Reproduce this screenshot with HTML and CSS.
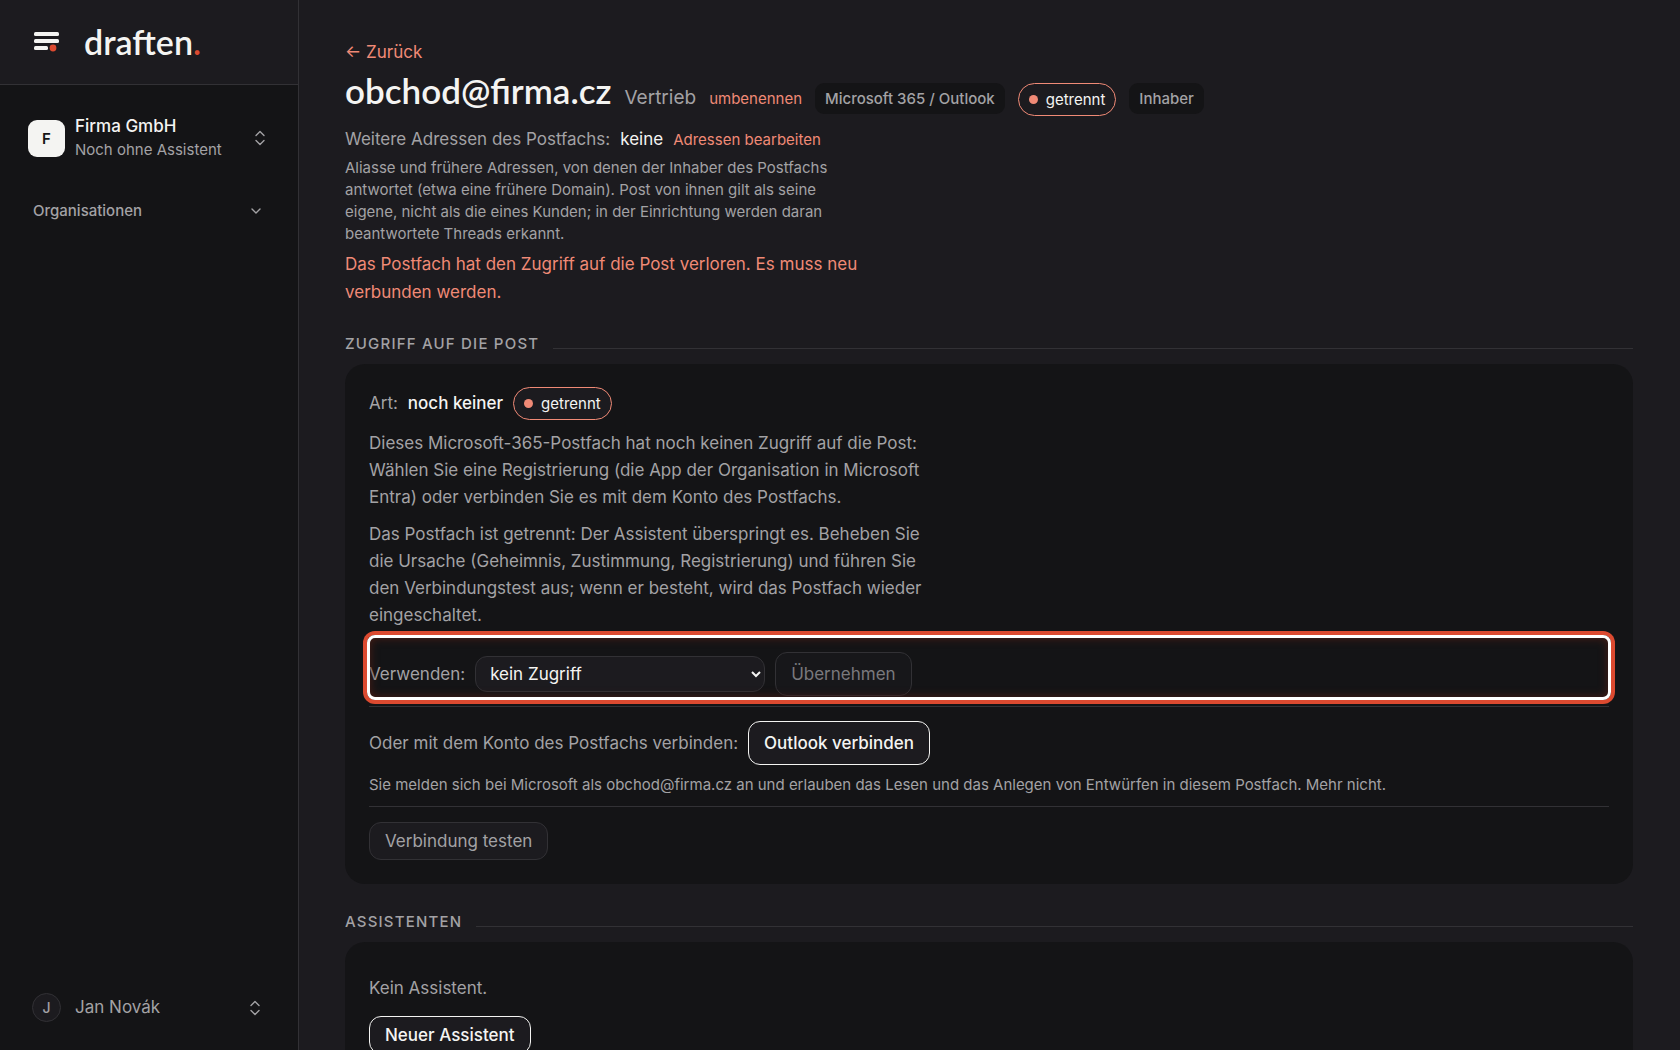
FILE: index.html
```html
<!DOCTYPE html>
<html lang="de">
<head>
    <meta charset="UTF-8">
    <meta name="viewport" content="width=device-width, initial-scale=1.0">
    <title>obchod@firma.cz – draften</title>
    <link rel="stylesheet" href="styles.css">
</head>
<body>
    <div class="app">
        <aside class="sidebar">
            <a href="#" class="brand">
                <svg class="brand-icon" width="26" height="20" viewBox="0 0 26 20" aria-hidden="true">
                    <rect x="0" y="0" width="25" height="4" rx="1.5" fill="#f4f4f2"/>
                    <rect x="0" y="7" width="25" height="4" rx="1.5" fill="#f4f4f2"/>
                    <rect x="0" y="14" width="14" height="4" rx="1.5" fill="#f4f4f2"/>
                    <circle cx="19" cy="16" r="4.2" fill="#1c1b1f"/>
                    <circle cx="19" cy="16" r="3.4" fill="#dc4a30"/>
                </svg>
                <span class="brand-name">draften<span class="brand-dot">.</span></span>
            </a>

            <button type="button" class="org">
                <span class="org-badge">F</span>
                <span class="org-text">
                    <span class="org-name">Firma GmbH</span>
                    <span class="org-note">Noch ohne Assistent</span>
                </span>
                <svg class="chevrons" width="10" height="16" viewBox="0 0 10 16" aria-hidden="true">
                    <path d="M1 5.5 5 1.5l4 4M1 10.5l4 4 4-4"/>
                </svg>
            </button>

            <button type="button" class="nav-group">
                <span>Organisationen</span>
                <svg class="chevrons" width="10" height="6" viewBox="0 0 10 6" aria-hidden="true">
                    <path d="M1 1l4 4 4-4"/>
                </svg>
            </button>

            <button type="button" class="user">
                <span class="user-badge">J</span>
                <span class="user-name">Jan Novák</span>
                <svg class="chevrons" width="10" height="16" viewBox="0 0 10 16" aria-hidden="true">
                    <path d="M1 5.5 5 1.5l4 4M1 10.5l4 4 4-4"/>
                </svg>
            </button>
        </aside>

        <main class="main">
            <a href="#" class="back">← Zurück</a>
            <div class="title-row">
                <h1>obchod@firma.cz</h1>
                <span class="label">Vertrieb</span>
                <a href="#" class="small-link">umbenennen</a>
                <span class="tag">Microsoft 365 / Outlook</span>
                <span class="pill">getrennt</span>
                <span class="tag">Inhaber</span>
            </div>
            <div class="address-row">
                <span>Weitere Adressen des Postfachs:</span>
                <span class="value">keine</span>
                <a href="#" class="small-link">Adressen bearbeiten</a>
            </div>
            <p class="hint address-hint">Aliasse und frühere Adressen, von denen der Inhaber des Postfachs antwortet (etwa eine frühere Domain). Post von ihnen gilt als seine eigene, nicht als die eines Kunden; in der Einrichtung werden daran beantwortete Threads erkannt.</p>
            <p class="warning">Das Postfach hat den Zugriff auf die Post verloren. Es muss neu verbunden werden.</p>

            <h2>Zugriff auf die Post</h2>
            <section class="card">
                <div class="kind-row">
                    <span>Art:</span>
                    <strong>noch keiner</strong>
                    <span class="pill">getrennt</span>
                </div>
                <p class="text">Dieses Microsoft-365-Postfach hat noch keinen Zugriff auf die Post: Wählen Sie eine Registrierung (die App der Organisation in Microsoft Entra) oder verbinden Sie es mit dem Konto des Postfachs.</p>
                <p class="text">Das Postfach ist getrennt: Der Assistent überspringt es. Beheben Sie die Ursache (Geheimnis, Zustimmung, Registrierung) und führen Sie den Verbindungstest aus; wenn er besteht, wird das Postfach wieder eingeschaltet.</p>
                <form class="access-form">
                    <label for="access">Verwenden:</label>
                    <select id="access" name="access">
                        <option>kein Zugriff</option>
                    </select>
                    <button type="submit" class="btn btn-tall" disabled>Übernehmen</button>
                </form>
                <div class="connect-row">
                    <span>Oder mit dem Konto des Postfachs verbinden:</span>
                    <button type="button" class="btn btn-tall btn-primary">Outlook verbinden</button>
                </div>
                <p class="hint">Sie melden sich bei Microsoft als obchod@firma.cz an und erlauben das Lesen und das Anlegen von Entwürfen in diesem Postfach. Mehr nicht.</p>
                <div class="test-row">
                    <button type="button" class="btn">Verbindung testen</button>
                </div>
            </section>

            <h2>Assistenten</h2>
            <section class="card">
                <p class="text">Kein Assistent.</p>
                <button type="button" class="btn btn-primary btn-new">Neuer Assistent</button>
            </section>
        </main>
    </div>
</body>
</html>
```
FILE: styles.css
```css
* {
    box-sizing: border-box;
}
body {
    margin: 0;
    font-family: Inter, sans-serif;
    font-optical-sizing: none;
    font-size: 17px;
    line-height: 27px;
    color: #a3a2a5;
    background-color: #1c1b1f;
}
h1, h2, p {
    margin: 0;
}
a {
    color: #f08a76;
    text-decoration: none;
}
button, select {
    font: inherit;
    font-optical-sizing: none;
    color: inherit;
}
.app {
    display: grid;
    grid-template-columns: 299px 1fr;
    height: 100vh;
}

/* Sidebar */
.sidebar {
    display: flex;
    flex-direction: column;
    background-color: #141416;
    border-right: 1px solid #323135;
}
.sidebar button {
    display: flex;
    align-items: center;
    padding: 0;
    border: none;
    background: none;
    text-align: left;
}
.brand {
    display: flex;
    align-items: center;
    gap: 24px;
    height: 85px;
    padding-left: 34px;
    background-color: #1c1b1f;
    border-bottom: 1px solid #323135;
}
.brand-name {
    font-family: Lato, sans-serif;
    font-size: 34px;
    font-weight: 600;
    line-height: 40px;
    color: #f4f4f2;
}
.brand-dot {
    color: #dc4a30;
}
.chevrons {
    margin-left: auto;
    fill: none;
    stroke: #a3a2a5;
    stroke-width: 1.4;
    stroke-linecap: round;
    stroke-linejoin: round;
}
.sidebar .org {
    gap: 10px;
    margin: 29px 33px 0 28px;
}
.org-badge {
    width: 37px;
    height: 37px;
    border-radius: 9px;
    background-color: #f4f4f2;
    color: #141416;
    font-size: 15px;
    font-weight: 600;
    line-height: 37px;
    text-align: center;
}
.org-name, .org-note {
    display: block;
    line-height: 24px;
}
.org-name {
    color: #f4f4f2;
    font-weight: 500;
}
.org-note {
    font-size: 15px;
}
.sidebar .nav-group {
    margin: 35px 37px 0 33px;
    font-size: 15px;
    font-weight: 500;
}
.sidebar .user {
    gap: 14px;
    margin: auto 38px 28px 32px;
}
.user-badge {
    width: 29px;
    height: 29px;
    border: 1px solid #323135;
    border-radius: 50%;
    background-color: #1c1b1f;
    font-size: 14px;
    font-weight: 500;
    line-height: 27px;
    text-align: center;
}

/* Mailbox header */
.main {
    padding: 39px 47px 40px 46px;
    overflow-y: auto;
    scrollbar-width: none;
}
.back {
    display: block;
}
.title-row {
    display: flex;
    flex-wrap: wrap;
    align-items: baseline;
    gap: 13px;
}
h1 {
    font-family: Lato, sans-serif;
    font-size: 35px;
    font-weight: 600;
    line-height: 49px;
    color: #f4f4f2;
}
.label {
    font-size: 19px;
}
.small-link {
    font-size: 15px;
}
.tag {
    padding: 3px 10px;
    border-radius: 9px;
    background-color: #141416;
    font-size: 15px;
    font-weight: 500;
    line-height: 25px;
}
.pill {
    display: inline-flex;
    align-items: center;
    gap: 8px;
    padding: 3px 10px;
    border: 1px solid #f08a76;
    border-radius: 17px;
    background-color: #1c1b1f;
    color: #f4f4f2;
    font-size: 15px;
    line-height: 25px;
}
.pill::before {
    content: "";
    width: 9px;
    height: 9px;
    border-radius: 50%;
    background-color: #f08a76;
}
.address-row, .kind-row, .access-form, .connect-row {
    display: flex;
    align-items: center;
    gap: 10px;
}
.address-row {
    margin-top: 10px;
}
.value, strong {
    color: #f4f4f2;
}
strong {
    font-weight: 500;
}
.hint {
    font-size: 15px;
    line-height: 22px;
}
.address-hint {
    max-width: 500px;
    margin-top: 4px;
}
.warning {
    max-width: 540px;
    margin-top: 5px;
    color: #f08a76;
    line-height: 28px;
}

/* Sections */
h2 {
    display: flex;
    align-items: center;
    gap: 14px;
    margin-top: 26px;
    font-size: 15px;
    font-weight: 500;
    line-height: 24px;
    letter-spacing: 0.08em;
    text-transform: uppercase;
}
h2::after {
    content: "";
    flex: 1;
    height: 1px;
    margin-top: 8px;
    background-color: #323135;
}
.card {
    margin-top: 8px;
    padding: 23px 24px 24px;
    border-radius: 20px;
    background-color: #141416;
}
.text {
    max-width: 576px;
    margin-top: 10px;
}
.btn {
    height: 38px;
    padding: 0 15px;
    border: 1px solid #323135;
    border-radius: 12px;
    background-color: #1c1b1f;
}
.btn-tall {
    height: 44px;
}
.btn-primary {
    border-color: #f4f4f2;
    color: #f4f4f2;
    font-weight: 500;
}
.btn:disabled {
    background-color: #17171a;
    color: #7a797d;
}
select {
    width: 290px;
    height: 36px;
    padding: 0 10px;
    border: 1px solid #323135;
    border-radius: 12px;
    background-color: #1c1b1f;
    color: #f4f4f2;
}
.access-form {
    position: relative;
    padding: 23px 0 10px;
}
/* Focus frame over the row that needs attention */
.access-form::after {
    content: "";
    position: absolute;
    inset: 6px -2px;
    border: 3px solid #fff;
    border-radius: 8px;
    box-shadow: 0 0 0 4px #dc4a30, inset 0 0 10px #4a1c14;
    pointer-events: none;
}
.connect-row {
    padding: 14px 0 9px;
    border-top: 1px solid #323135;
}
.test-row {
    margin-top: 10px;
    padding-top: 15px;
    border-top: 1px solid #323135;
}
.btn-new {
    margin-top: 14px;
}
```
